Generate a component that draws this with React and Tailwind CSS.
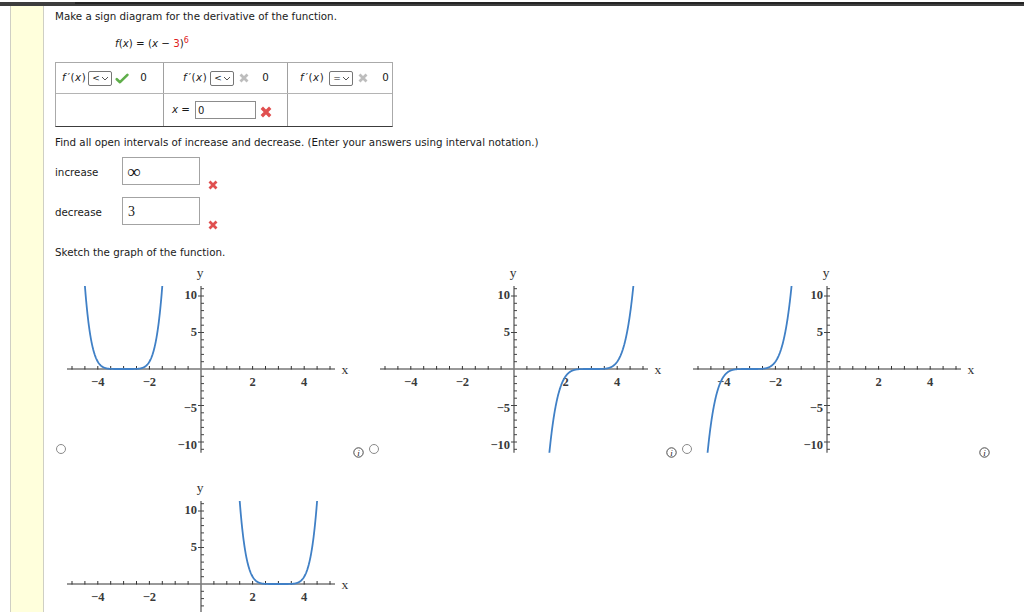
import React from "react";

const Check = () => (
  <svg width="14" height="11" viewBox="0 0 14 11" className="block">
    <path d="M1.8 6.2 L5 9.2 L12.4 1.8" fill="none" stroke="#5fae4a" strokeWidth="2.6" strokeLinecap="round" strokeLinejoin="round" />
  </svg>
);

const XMark = ({ color, size = 10 }) => (
  <svg width={size} height={size} viewBox="0 0 10 10" className="block">
    <path d="M1.5 1.5 L8.5 8.5 M8.5 1.5 L1.5 8.5" fill="none" stroke={color} strokeWidth="2.8" />
  </svg>
);

const Sel = ({ v }) => (
  <span className="inline-flex items-center h-[15px] w-[24px] border border-[#767676] rounded-[2px] pl-[3px] text-[9px] leading-none text-[#222]">
    <span className="w-[9px]">{v}</span>
    <svg width="8" height="5" viewBox="0 0 8 5" className="block">
      <path d="M1 1 L4 4 L7 1" fill="none" stroke="#555" strokeWidth="1" />
    </svg>
  </span>
);

const FP = () => (
  <span className="tracking-[0.5px]">
    <i>f</i>&#8202;′(<i>x</i>)
  </span>
);

const Info = () => (
  <svg width="11" height="11" viewBox="0 0 11 11" className="block">
    <circle cx="5.5" cy="5.5" r="4.7" fill="none" stroke="#333" strokeWidth="0.9" />
    <text x="5.6" y="8.6" textAnchor="middle" fontFamily="'Liberation Serif', serif" fontStyle="italic" fontSize="9" fill="#222">i</text>
  </svg>
);

const Radio = () => (
  <span className="block w-[10px] h-[10px] rounded-full border border-[#8a8a8a] bg-white" />
);

function Graph({ f, id }) {
  const ox = 134, oy = 107, ux = 25.8, uy = 7.3;
  const top = 24, bot = 190.7;
  let d = "";
  for (let i = 0; i <= 2080; i++) {
    const x = -5.2 + i * 0.005;
    let y = f(x);
    let py = oy - y * uy;
    if (py < -50) py = -50;
    if (py > 300) py = 300;
    const px = ox + x * ux;
    d += (i === 0 ? "M" : "L") + px.toFixed(2) + " " + py.toFixed(2);
  }
  const xt = [];
  for (let k = -10; k <= 10; k++) {
    if (k === 0) continue;
    const px = ox + k * 0.5 * ux;
    xt.push(<line key={k} x1={px} x2={px} y1={oy - 3} y2={oy + 0.5} stroke="#333" strokeWidth="1" />);
  }
  const yt = [];
  for (let k = -11; k <= 11; k++) {
    if (k === 0) continue;
    const py = oy - k * uy;
    const major = k % 5 === 0;
    yt.push(<line key={k} x1={major ? ox - 3 : ox} x2={ox + 3} y1={py} y2={py} stroke="#444" strokeWidth="1" />);
  }
  const lab = { fontFamily: "'Liberation Serif', serif", fontSize: 12.5, fontWeight: 700, fill: "#3a3a3a" };
  const xl = [[-4, "−4"], [-2, "−2"], [2, "2"], [4, "4"]];
  return (
    <svg width="286" height="195" viewBox="0 0 286 195" className="block shrink-0">
      <defs>
        <clipPath id={id}>
          <rect x="0" y={top} width="286" height={bot - top} />
        </clipPath>
      </defs>
      <line x1="0" x2="268" y1={oy} y2={oy} stroke="#333" strokeWidth="1" />
      {xt}
      <line x1={ox} x2={ox} y1={top} y2={bot} stroke="#7d7d7d" strokeWidth="1.6" />
      {yt}
      {xl.map(([v, t]) => (
        <text key={v} x={ox + v * ux} y="124" textAnchor="middle" style={lab}>{t}</text>
      ))}
      <text x="130" y="37.3" textAnchor="end" style={lab}>10</text>
      <text x="130" y="74" textAnchor="end" style={lab}>5</text>
      <text x="130" y="149.7" textAnchor="end" style={lab}>−5</text>
      <text x="130" y="187.3" textAnchor="end" style={lab}>−10</text>
      <text x="133" y="14.5" textAnchor="middle" style={{ ...lab, fontSize: 13.5, fontWeight: 400, fill: "#333" }}>y</text>
      <text x="274.5" y="112.3" style={{ ...lab, fontSize: 13.5, fontWeight: 400, fill: "#333" }}>x</text>
      <path d={d} fill="none" stroke="#4080c6" strokeWidth="1.8" clipPath={`url(#${id})`} />
    </svg>
  );
}

const GraphCell = ({ f, id }) => (
  <div className="w-[313px] flex items-end">
    <div className="ml-[1px] mb-[3px]">
      <Radio />
    </div>
    <div className="ml-[1px]">
      <Graph f={f} id={id} />
    </div>
    <div className="mb-[-1px]">
      <Info />
    </div>
  </div>
);

export default function App() {
  return (
    <div className="w-[1024px] h-[612px] overflow-hidden bg-white text-[#1a1a1a] font-['DejaVu_Sans',sans-serif] text-[10.3px]">
      <div className="h-[4px] bg-[#3d3d3d]">
        <div className="ml-[75px] h-[2px] mt-[2px] bg-[#242424]" />
      </div>
      <div className="flex h-[608px]">
        <div className="w-[10px] shrink-0" />
        <div className="w-[34px] shrink-0 bg-[#ffffdc] border-l border-r border-[#cfcfc4]" />
        <div className="pl-[11px] flex-1">
          <p className="mt-[4px] leading-[13px]">Make a sign diagram for the derivative of the function.</p>
          <p className="mt-[14px] leading-[13px] ml-[60px]">
            <i>f</i>(<i>x</i>) = (<i>x</i> − <span className="text-[#e0201b]">3</span>)
            <sup className="text-[8px] text-[#e0201b]">6</sup>
          </p>

          <div className="mt-[12px] w-[338px] border border-[#aaaaaa] border-b-[#3c3c3c]">
            <div className="flex h-[31px] border-b border-[#b4b4b4]">
              <div className="w-[108px] border-r border-[#a0a0a0] flex items-center pl-[6px]">
                <FP />
                <span className="ml-[2px]"><Sel v="<" /></span>
                <span className="ml-[3px]"><Check /></span>
                <span className="ml-[11px]">0</span>
              </div>
              <div className="w-[124px] border-r border-[#a0a0a0] flex items-center pl-[19px]">
                <FP />
                <span className="ml-[3px]"><Sel v="<" /></span>
                <span className="ml-[5px]"><XMark color="#bdbdbd" /></span>
                <span className="ml-[13px]">0</span>
              </div>
              <div className="flex-1 flex items-center pl-[12px]">
                <FP />
                <span className="ml-[5px]"><Sel v="=" /></span>
                <span className="ml-[5px]"><XMark color="#bdbdbd" /></span>
                <span className="ml-[14px]">0</span>
              </div>
            </div>
            <div className="flex h-[32px]">
              <div className="w-[108px] border-r border-[#a0a0a0]" />
              <div className="w-[124px] border-r border-[#a0a0a0] flex items-center pl-[8px]">
                <span><i>x</i> = </span>
                <span className="ml-[5px] w-[61px] h-[18px] border border-[#8c8c8c] flex items-center pl-[2px] text-[10px]">0</span>
                <span className="ml-[4px] translate-y-[2px]"><XMark color="#e04f4f" size={12} /></span>
              </div>
              <div className="flex-1" />
            </div>
          </div>

          <p className="mt-[9px] leading-[13px]">Find all open intervals of increase and decrease. (Enter your answers using interval notation.)</p>

          <div className="mt-[8px] flex items-end">
            <span className="w-[67px] self-center pt-[3px]">increase</span>
            <span className="w-[78px] h-[28px] border border-[#a3a3a3] flex items-center pl-[4px] font-['Liberation_Serif',serif] text-[19px] leading-none">∞</span>
            <span className="ml-[8px] translate-y-[5px]"><XMark color="#e04f4f" /></span>
          </div>
          <div className="mt-[12px] flex items-end">
            <span className="w-[67px] self-center pt-[3px]">decrease</span>
            <span className="w-[78px] h-[28px] border border-[#a3a3a3] flex items-center pl-[5px] font-['Liberation_Serif',serif] text-[14px]">3</span>
            <span className="ml-[8px] translate-y-[5px]"><XMark color="#e04f4f" /></span>
          </div>

          <p className="mt-[21px] leading-[13px]">Sketch the graph of the function.</p>

          <div className="mt-[3px] grid grid-cols-[313px_313px_313px] gap-y-[20px]">
            <GraphCell id="g1" f={(x) => Math.pow(x + 3, 6)} />
            <GraphCell id="g2" f={(x) => Math.pow(x - 3, 5)} />
            <GraphCell id="g3" f={(x) => Math.pow(x + 3, 5)} />
            <GraphCell id="g4" f={(x) => Math.pow(x - 3, 6)} />
          </div>
        </div>
      </div>
    </div>
  );
}
